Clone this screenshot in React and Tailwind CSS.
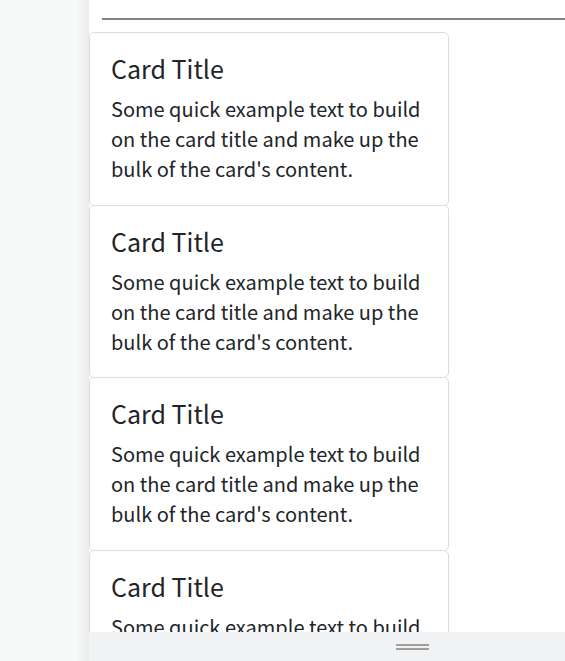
export default function App() {
  const cards = [1, 2, 3, 4];
  return (
    <div className="flex h-[661px] w-[565px] overflow-hidden bg-white text-[#212529]" style={{ fontFamily: '"Noto Sans CJK KR", "Noto Sans", sans-serif' }}>
      <div className="w-[89px] shrink-0 bg-gradient-to-r from-[#f8f9f9] from-85% to-[#e9ebeb]" />
      <div className="relative flex min-w-0 flex-1 flex-col">
        <div className="pl-[13px] pt-[18px]">
          <div className="h-[2px] bg-[#808080]" />
        </div>
        <div className="mt-[12px] flex-1 overflow-hidden">
          {cards.map((c, i) => (
            <div key={c} className={`${i > 0 ? "-mt-px" : ""} h-[173.5px] w-[360px] rounded-[5px] border border-[#dcdcdc] bg-white px-[21px] py-[20px]`}>
              <h5 className="mb-[11px] text-[25px] leading-[30px]">Card Title</h5>
              <p className="text-[20px] leading-[30px]">Some quick example text to build on the card title and make up the bulk of the card's content.</p>
            </div>
          ))}
        </div>
        <div className="flex h-[29px] shrink-0 items-center bg-[#f1f2f4] pl-[307px]">
          <div className="flex w-[33px] flex-col gap-[2px]">
            <div className="h-[2px] bg-[#9e9e9e]" />
            <div className="h-[2px] bg-[#9e9e9e]" />
          </div>
        </div>
      </div>
    </div>
  );
}
